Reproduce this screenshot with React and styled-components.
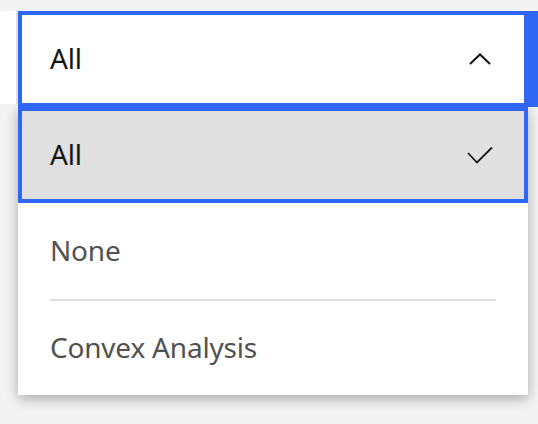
import React from 'react';
import styled, { createGlobalStyle } from 'styled-components';

const GlobalStyle = createGlobalStyle`
  html, body {
    margin: 0;
    padding: 0;
    background: #f3f3f3;
  }
  body {
    font-family: "Noto Sans", "Open Sans", sans-serif;
  }
`;

const blue = '#2f66f4';

const Page = styled.div`
  width: 538px;
  height: 424px;
  padding-top: 11px;
  box-sizing: border-box;
  overflow: hidden;
`;

const Bar = styled.div`
  display: flex;
  align-items: flex-start;
  width: 100%;
`;

const Gutter = styled.div`
  width: 16px;
  height: 93px;
  background: #fff;
  border-right: 2px solid #dedede;
  flex-shrink: 0;
`;

const Field = styled.button`
  flex: 1;
  display: flex;
  align-items: center;
  justify-content: space-between;
  height: 96px;
  box-sizing: border-box;
  margin: 0;
  padding: 0 0 3px 28px;
  background: #fff;
  border: 4px solid ${blue};
  border-right-width: 14px;
  font: inherit;
  font-size: 28px;
  letter-spacing: -0.2px;
  color: #161616;
  cursor: pointer;
`;

const IconSlot = styled.span`
  display: flex;
  align-items: center;
  margin-right: ${(p) => p.$right}px;
  margin-top: ${(p) => p.$top || 0}px;
`;

const Menu = styled.ul`
  list-style: none;
  margin: 0 0 0 18px;
  padding: 0;
  width: 510px;
  background: #fff;
  box-shadow: 0 4px 12px rgba(0, 0, 0, 0.3);
`;

const Option = styled.li`
  display: flex;
  height: 96px;
  box-sizing: border-box;
  padding: 0 32px;
  background: ${(p) => (p.$selected ? '#e0e0e0' : '#fff')};
  ${(p) => p.$selected && `border: 4px solid ${blue}; padding: 0 0 0 28px;`}
`;

const OptionContent = styled.div`
  flex: 1;
  display: flex;
  align-items: center;
  justify-content: space-between;
  padding-bottom: 3px;
  border-top: ${(p) => (p.$divider ? '2px solid #e0e0e0' : '0')};
  font-size: 28px;
  letter-spacing: -0.2px;
  color: ${(p) => (p.$selected ? '#161616' : '#525252')};
`;

const ChevronUp = () => (
  <svg width="22" height="12" viewBox="0 0 22 12" fill="none">
    <polyline points="1,11 11,1.5 21,11" stroke="#161616" strokeWidth="2" />
  </svg>
);

const Check = () => (
  <svg width="26" height="18" viewBox="0 0 26 18" fill="none">
    <polyline points="1,7 10,16.5 25,1.5" stroke="#161616" strokeWidth="1.8" />
  </svg>
);

const options = [
  { label: 'All', selected: true },
  { label: 'None' },
  { label: 'Convex Analysis', divider: true },
];

export default function App() {
  return (
    <Page>
      <GlobalStyle />
      <Bar>
        <Gutter />
        <Field>
          All
          <IconSlot $right={33} $top={3}>
            <ChevronUp />
          </IconSlot>
        </Field>
      </Bar>
      <Menu>
        {options.map((o) => (
          <Option key={o.label} $selected={o.selected}>
            <OptionContent $selected={o.selected} $divider={o.divider}>
              {o.label}
              {o.selected && (
                <IconSlot $right={31} $top={3}>
                  <Check />
                </IconSlot>
              )}
            </OptionContent>
          </Option>
        ))}
      </Menu>
    </Page>
  );
}
